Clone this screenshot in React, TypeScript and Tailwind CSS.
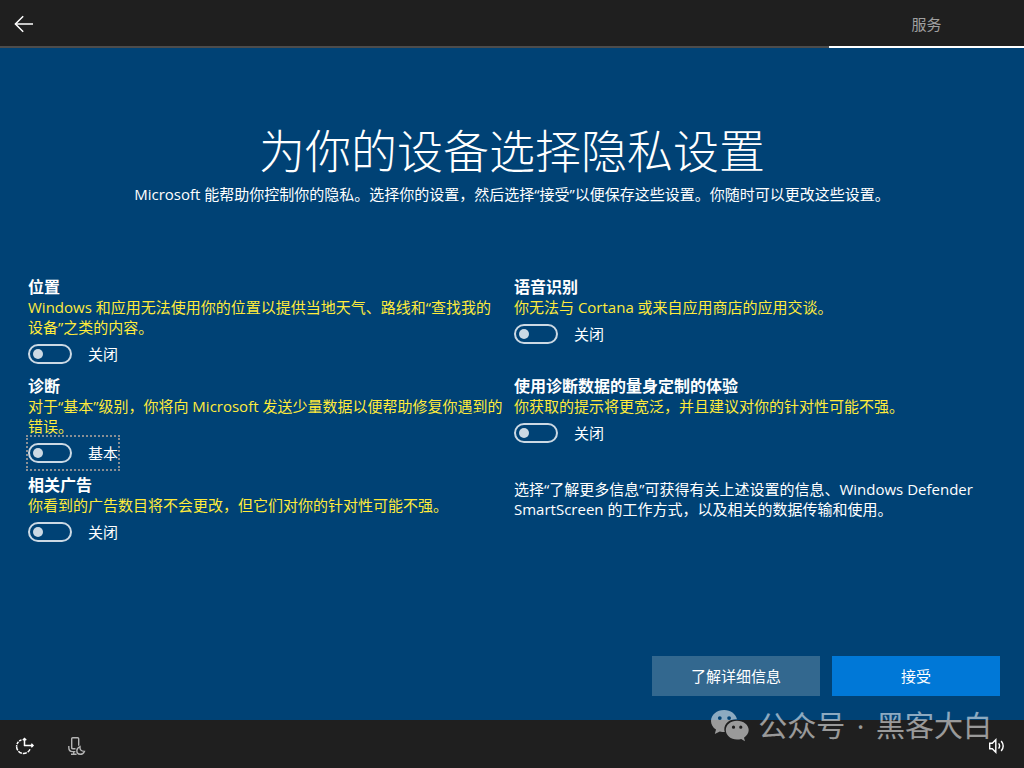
import { useState } from 'react';

// 每一項隱私設定的文字
const settings = [
  {
    id: 'location',
    title: '位置',
    desc: 'Windows 和应用无法使用你的位置以提供当地天气、路线和“查找我的设备”之类的内容。',
    off: '关闭',
    on: '开启',
  },
  {
    id: 'speech',
    title: '语音识别',
    desc: '你无法与 Cortana 或来自应用商店的应用交谈。',
    off: '关闭',
    on: '开启',
  },
  {
    id: 'diagnostics',
    title: '诊断',
    desc: '对于“基本”级别，你将向 Microsoft 发送少量数据以便帮助修复你遇到的错误。',
    off: '基本',
    on: '完整',
    active: true,
  },
  {
    id: 'tailored',
    title: '使用诊断数据的量身定制的体验',
    desc: '你获取的提示将更宽泛，并且建议对你的针对性可能不强。',
    off: '关闭',
    on: '开启',
  },
  {
    id: 'ads',
    title: '相关广告',
    desc: '你看到的广告数目将不会更改，但它们对你的针对性可能不强。',
    off: '关闭',
    on: '开启',
  },
];

type Setting = (typeof settings)[number];

function SettingItem({ item }: { item: Setting }) {
  const [checked, setChecked] = useState(false);

  return (
    <section>
      <h2 className="text-[16px] leading-5 font-bold">{item.title}</h2>
      <p className="text-[#ffeb3b]">{item.desc}</p>
      <label
        className={
          item.active
            ? 'mt-px inline-flex h-8 items-center gap-4 align-top outline-2 outline-dotted outline-[#8a8f94]'
            : 'mt-px inline-flex h-8 items-center gap-4 align-top'
        }
      >
        <input
          type="checkbox"
          name={item.id}
          checked={checked}
          onChange={(e) => setChecked(e.target.checked)}
          className="flex h-5 w-11 appearance-none items-center rounded-full border-2 border-[#ccd9e4] px-[3px] outline-none before:h-[10px] before:w-[10px] before:rounded-full before:bg-[#ccd9e4] checked:justify-end checked:bg-[#0078d7]"
        />
        <span>{checked ? item.on : item.off}</span>
      </label>
    </section>
  );
}

function BackIcon() {
  return (
    <svg width="20" height="18" viewBox="0 0 20 18" fill="none" stroke="#fff" strokeWidth="1.5">
      <path d="M19 9H1.5" />
      <path d="M9.2 1.2L1.4 9l7.8 7.8" />
    </svg>
  );
}

function EaseIcon() {
  return (
    <svg width="20" height="18" viewBox="0 0 20 18" fill="none" stroke="#fff" strokeWidth="1.5">
      <path d="M6.5 2.9A7 7 0 0 0 1.6 9.500" strokeDasharray="2.600 1" />
      <path d="M1.600 9.500A7 7 0 0 0 15 12.300" strokeDasharray="4 1" />
      <path d="M9.500 9V1.500M9 8.500h9" />
      <path d="M7.800 3.200l1.700-1.700 1.700 1.700M16.300 6.800L18 8.500l-1.700 1.700" />
    </svg>
  );
}

function MicIcon() {
  return (
    <svg width="20" height="20" viewBox="0 0 20 20" fill="none" stroke="#b4b4b4" strokeWidth="1.4">
      <path d="M4.700 12.500V2.700Q4.700 1.700 5.700 1.700h5Q11.700 1.700 11.700 2.700v7" />
      <path d="M4.700 11.800q.2 1 1.400 1h2.400" />
      <path d="M1.800 10v1.800Q1.800 15.600 5.600 15.600h2.800M6.700 15.600v2.600M4 18.300h5.600" />
      <path d="M13 10.600q-.5 4.600 4.400 4.800-1.200 3-4.400 2.900-3.200-.4-3.200-3.400 0-2.900 3.200-4.300z" />
    </svg>
  );
}

function VolumeIcon() {
  return (
    <svg width="18" height="16" viewBox="0 0 18 16" fill="none" stroke="#fff" strokeWidth="1.4">
      <path d="M1.700 5.200h2.600L7.800 1.700v12.600L4.300 10.800H1.700z" />
      <path d="M10.600 5.400q2 2.600 0 5.200M13.200 3q4 5 0 10" />
    </svg>
  );
}

function WechatIcon() {
  return (
    <svg width="40" height="34" viewBox="0 0 40 34" fill="#fff">
      <path
        fillRule="evenodd"
        d="M14.2 1C6.8 1 1 5.8 1 12c0 3.6 1.9 6.5 5 8.6L4.8 25l5-2.600c1.700.5 3.300.7 5 .7-.3-1-.5-1.900-.5-2.900C14.300 14.300 19.700 10.200 26 10.200h1C25.800 4.800 20.500 1 14.200 1zM9.800 7.200a1.900 1.900 0 1 1 0 3.800 1.900 1.900 0 0 1 0-3.800zm9.300 0a1.900 1.900 0 1 1 0 3.800 1.900 1.900 0 0 1 0-3.800z"
      />
      <path
        fillRule="evenodd"
        d="M27 11.700c-6.300 0-11.200 4.100-11.200 9.400s4.900 9.500 11.200 9.500c1.400 0 2.800-.3 4.200-.6l3.800 2.200-1-3.500c2.800-2 4.700-4.500 4.700-7.600 0-5.300-5.300-9.400-11.700-9.400zm-3.500 4.900a1.600 1.600 0 1 1 0 3.200 1.600 1.600 0 0 1 0-3.200zm7.300 0a1.600 1.600 0 1 1 0 3.200 1.600 1.600 0 0 1 0-3.200z"
      />
    </svg>
  );
}

export default function App() {
  return (
    <div className="relative flex min-h-screen flex-col bg-[#004275] font-['Open_Sans','Noto_Sans_CJK_SC',sans-serif] text-[15px] leading-5 text-white">
      {/* 頂部列 */}
      <header className="flex h-12 bg-[#1f1f1f]">
        <div className="flex flex-1 items-center border-b-2 border-[#4c4c4c] pl-[14px]">
          <button aria-label="返回" className="pt-px">
            <BackIcon />
          </button>
        </div>
        <div className="flex w-[195px] items-center justify-center border-b-2 border-white pt-0.5 text-[#a0a0a0]">服务</div>
      </header>

      <main className="flex flex-1 flex-col">
        {/* 標題區塊 */}
        <div className="px-7 pt-[68px] text-center">
          <h1 className="text-[46px] leading-[68px] font-light">为你的设备选择隐私设置</h1>
          <p>Microsoft 能帮助你控制你的隐私。选择你的设置，然后选择“接受”以便保存这些设置。你随时可以更改这些设置。</p>
        </div>

        {/* 設定清單 */}
        <div className="mt-[73px] grid gap-x-[10px] gap-y-1.5 pr-[34px] pl-7 md:grid-cols-2">
          {settings.map((item) => (
            <SettingItem key={item.id} item={item} />
          ))}
          <p className="pt-1">
            选择“了解更多信息”可获得有关上述设置的信息、Windows Defender SmartScreen 的工作方式，以及相关的数据传输和使用。
          </p>
        </div>

        {/* 按鈕 */}
        <div className="mt-auto flex justify-end gap-3 p-6">
          <button className="h-10 w-[168px] bg-[#33688f]">了解详细信息</button>
          <button className="h-10 w-[168px] bg-[#0078d7]">接受</button>
        </div>
      </main>

      {/* 底部列 */}
      <footer className="flex h-12 items-center bg-[#1f1f1f] pr-[18px] pl-[15px]">
        <div className="flex flex-1 items-center gap-8 pt-1">
          <button aria-label="轻松使用">
            <EaseIcon />
          </button>
          <button aria-label="麦克风">
            <MicIcon />
          </button>
        </div>
        <button aria-label="音量" className="pt-1">
          <VolumeIcon />
        </button>
      </footer>

      {/* 浮水印 */}
      <div className="pointer-events-none absolute right-8 bottom-6 flex items-center gap-2 opacity-55">
        <WechatIcon />
        <span className="text-[29px] leading-9">
          公众号<span className="mx-1"> · </span>黑客大白
        </span>
      </div>
    </div>
  );
}
